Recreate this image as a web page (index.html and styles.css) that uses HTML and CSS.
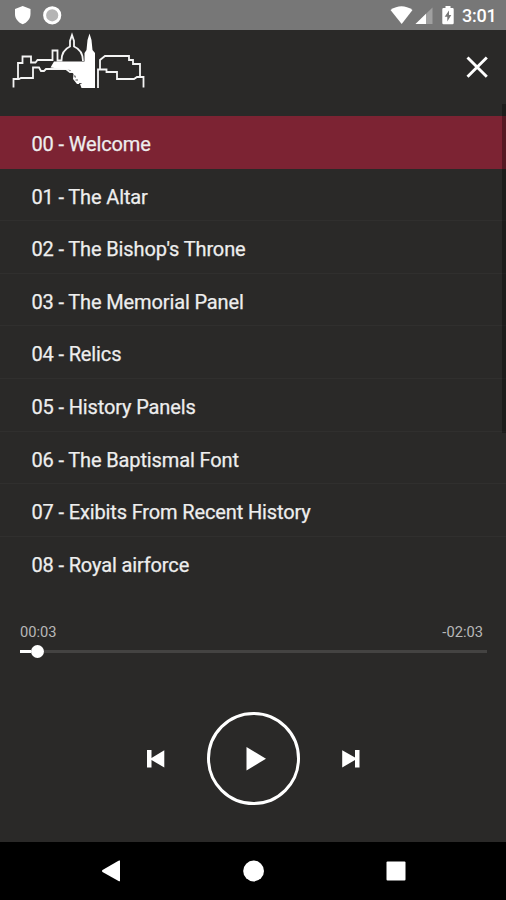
FILE: index.html
```html
<!DOCTYPE html>
<html lang="en">
<head>
<meta charset="utf-8">
<title>Audio guide</title>
<link rel="stylesheet" href="styles.css">
</head>
<body>
<div class="phone">
  <div class="status">
    <svg class="status-left" width="70" height="30" viewBox="0 0 70 30">
      <path d="M22.700 6 L30.500 9 V14 C30.500 19 27 22.500 22.700 24.300 C18.400 22.500 15 19 15 14 V9 Z" fill="#fff"/>
      <circle cx="52.200" cy="15.300" r="7.600" fill="#b4b4b4" stroke="#fff" stroke-width="3"/>
    </svg>
    <svg class="status-right" width="70" height="30" viewBox="385 0 70 30">
      <path d="M390.500 10 Q401.500 2.500 412.500 10 L401.700 24 Z" fill="#fff"/>
      <path d="M432.500 7.500 V24 H415.500 Z" fill="#a0a0a0"/>
      <path d="M426 13.800 V24 H415.500 Z" fill="#fff"/>
      <path d="M445.500 6 H450.500 V8 H452.500 Q453.700 8 453.700 9.200 V23 Q453.700 24.200 452.500 24.200 H443.500 Q442.300 24.200 442.300 23 V9.200 Q442.300 8 443.500 8 H445.500 Z" fill="#fff"/>
      <path d="M449 10.500 L444.700 16.800 H447.300 V21.500 L451.300 15 H449 Z" fill="#777"/>
    </svg>
    <span class="clock">3:01</span>
  </div>
  <header class="header">
    <svg class="logo" width="140" height="60" viewBox="8 32 140 60" fill="none" stroke="#f4f4f4" stroke-width="1.800">
      <path d="M13.500 87.500 V79 H19 L21 78 H33 V67.500 H39 L41 71 H44 L46 69 H66 L70 72 H74"/>
      <path d="M18 79 V63 H22.500 V56.500 H31 V62.500 H35.500 L37.500 60 H52.500 V50.500 H57.500 V60.500 H61.500 C61.500 53 64.500 49 70 46.500 V41 L72 35 L74 41 V46.500 C80 49 83 53 83 61"/>
      <path d="M54 61.500 H84.500 V53 L86.500 50 L87.500 40 L89.500 33.500 L91.500 40 L92.500 50 L95 53 V88 H81.500 L80 84 H77 L73 79 L73.500 74 L70 70 L50.500 67.500 Z" fill="#fff" stroke="none"/>
      <path d="M74.500 75.500 l1 2 M75.500 80 h2.500 M79 83.500 h2.500" stroke="#555" stroke-width="1.200"/>
      <path d="M98 88 V69.500 H106.500 V72 H117 V79 H134 L137 77 H143.500 V87.500"/>
      <path d="M100 69 V60 L105 56 H129 V60 H133 V64 H140 V77"/>
    </svg>
    <svg class="close" width="24" height="24" viewBox="465 55 24 24">
      <path d="M467.500 57.500 L486.800 76.800 M486.800 57.500 L467.500 76.800" stroke="#fff" stroke-width="2.900"/>
    </svg>
  </header>
  <main class="tracks">
    <div class="track active">00 - Welcome</div>
    <div class="track">01 - The Altar</div>
    <div class="track">02 - The Bishop's Throne</div>
    <div class="track">03 - The Memorial Panel</div>
    <div class="track">04 - Relics</div>
    <div class="track">05 - History Panels</div>
    <div class="track">06 - The Baptismal Font</div>
    <div class="track">07 - Exibits From Recent History</div>
    <div class="track last">08 - Royal airforce</div>
    <div class="scrollbar"></div>
  </main>
  <section class="player">
    <div class="times"><span>00:03</span><span>-02:03</span></div>
    <div class="seek"><div class="played"></div><div class="thumb"></div><div class="remaining"></div></div>
    <div class="controls">
      <svg width="20" height="20" viewBox="0 0 20 20" fill="#fff"><path d="M2 1 H6.500 V9 L19.300 1.200 V18.500 L6.500 11 V18.500 H2 Z"/></svg>
      <div class="play"><svg width="20" height="24" viewBox="0 0 20 24" fill="#fff"><path d="M.500 0 L20 11.700 L.500 23.400 Z"/></svg></div>
      <svg width="20" height="20" viewBox="0 0 20 20" fill="#fff"><path d="M17.500 1 H13 V8.500 L.200 1.200 V18.500 L13 11 V18.500 H17.500 Z"/></svg>
    </div>
  </section>
  <nav class="nav">
    <svg width="20" height="22" viewBox="0 0 20 22" fill="#fff"><path d="M18 .500 V21 Q17.500 21.500 16.500 21 L.500 12 Q-.500 11 .500 10 L16.500 .800 Q17.500 .300 18 .500 Z"/></svg>
    <svg width="22" height="22" viewBox="0 0 22 22" fill="#fff"><circle cx="10.600" cy="11" r="10.400"/></svg>
    <svg width="20" height="20" viewBox="0 0 20 20" fill="#fff"><rect x=".500" y=".500" width="19" height="19" rx="1"/></svg>
  </nav>
</div>
</body>
</html>
```
FILE: styles.css
```css
* { box-sizing: border-box; }
body { margin: 0; background: #2a2928; font-family: Roboto, "Liberation Sans", sans-serif; color: #eee; }
svg { display: block; flex: none; }
.phone { width: 506px; height: 900px; display: flex; flex-direction: column; overflow: hidden; }
.status { height: 30px; background: #777; display: flex; flex: none; }
.status-right { margin-left: 315px; }
.clock { margin-left: 7px; font-size: 18px; line-height: 32px; font-weight: 500; color: #fff; letter-spacing: -0.2px; }
.header { height: 86px; flex: none; display: flex; justify-content: space-between; padding: 2px 17px 0 8px; }
.close { margin-top: 23px; }
.tracks { position: relative; flex: none; height: 474px; }
.track { height: 52.6px; padding: 2px 0 0 31.4px; font-size: 20px; letter-spacing: -0.13px; line-height: 52px; white-space: nowrap; border-bottom: 1px solid #302f2e; -webkit-text-stroke: .25px #eee; }
.track.last { border: 0; }
.track.active { background: #7c2333; border-color: #7c2333; }
.scrollbar { position: absolute; right: 0; top: -12px; width: 4px; height: 329px; background: rgba(0, 0, 0, .3); }
.player { height: 252px; flex: none; padding: 32px 19px 0 20px; }
.times { display: flex; justify-content: space-between; padding-right: 4px; font-size: 14.7px; line-height: 20px; color: #b8b8b8; }
.seek { display: flex; align-items: center; height: 14px; margin-top: 2px; }
.played { width: 11px; height: 3px; background: #fff; }
.thumb { width: 13px; height: 13px; border-radius: 50%; background: #fff; }
.remaining { flex: 1; height: 3px; background: #444342; }
.controls { display: flex; align-items: center; justify-content: center; gap: 42px; margin-top: 54px; }
.play { width: 93px; height: 93px; border: 3px solid #fff; border-radius: 50%; display: flex; align-items: center; justify-content: center; padding-left: 5px; }
.nav { flex: 1; background: #000; display: flex; align-items: center; justify-content: space-between; padding: 0 100px 0 102px; }
```
